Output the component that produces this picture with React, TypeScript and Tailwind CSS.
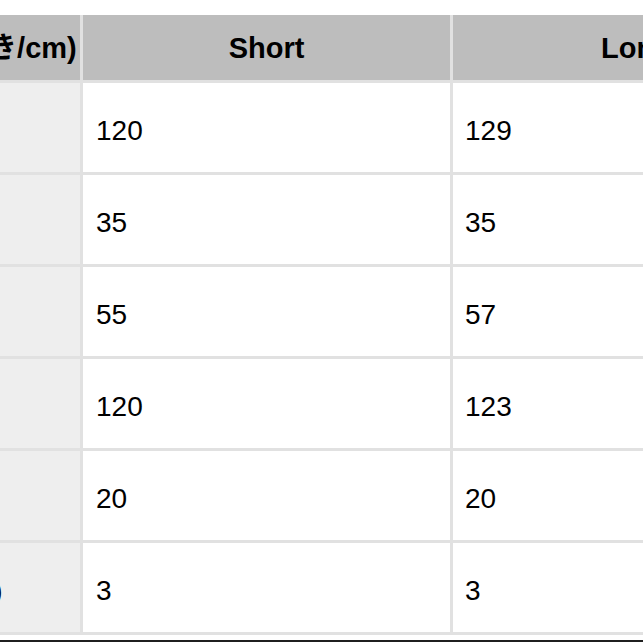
const FONT = "font-['Liberation_Sans','Noto_Sans_CJK_JP',sans-serif]";

const ROWS: { label: string; short: string; long: string }[] = [
  { label: "着丈", short: "120", long: "129" },
  { label: "肩幅", short: "35", long: "35" },
  { label: "身幅", short: "55", long: "57" },
  { label: "裾周り", short: "120", long: "123" },
  { label: "袖丈", short: "20", long: "20" },
  { label: "ポケット(個)", short: "3", long: "3" },
];

export default function App() {
  return (
    <div className={`w-[643px] h-[643px] overflow-hidden bg-white pt-[15px] ${FONT}`}>
      <div className="ml-[-169px] w-[989px]">
        {/* Size table */}
        <div className="grid grid-cols-[249px_367px_367px] gap-[3px] bg-[#e1e1e1] border-b-[3px] border-[#e1e1e1]">
          <div className="h-[65px] pt-[3px] bg-[#bdbdbd] flex items-center justify-center text-[29px] font-bold text-black whitespace-nowrap">
            サイズ(平置き/cm)
          </div>
          <div className="h-[65px] pt-[3px] bg-[#bdbdbd] flex items-center justify-center text-[29px] font-bold text-black">
            Short
          </div>
          <div className="h-[65px] pt-[3px] bg-[#bdbdbd] flex items-center justify-center text-[29px] font-bold text-black">
            Long
          </div>
          {ROWS.map((row) => (
            <div key={row.label} className="contents">
              <div className="h-[89px] pt-[6px] bg-[#eeeeee] flex items-center pl-[13px] text-[28px] text-black whitespace-nowrap">
                {row.label}
              </div>
              <div className="h-[89px] pt-[6px] bg-white flex items-center pl-[13px] text-[28px] text-black">
                {row.short}
              </div>
              <div className="h-[89px] pt-[6px] bg-white flex items-center pl-[12px] text-[28px] text-black">
                {row.long}
              </div>
            </div>
          ))}
        </div>
      </div>
      <div className="h-[5px] bg-white" />
      <div className="h-[2px] bg-[#1f1f1f]" />
    </div>
  );
}
